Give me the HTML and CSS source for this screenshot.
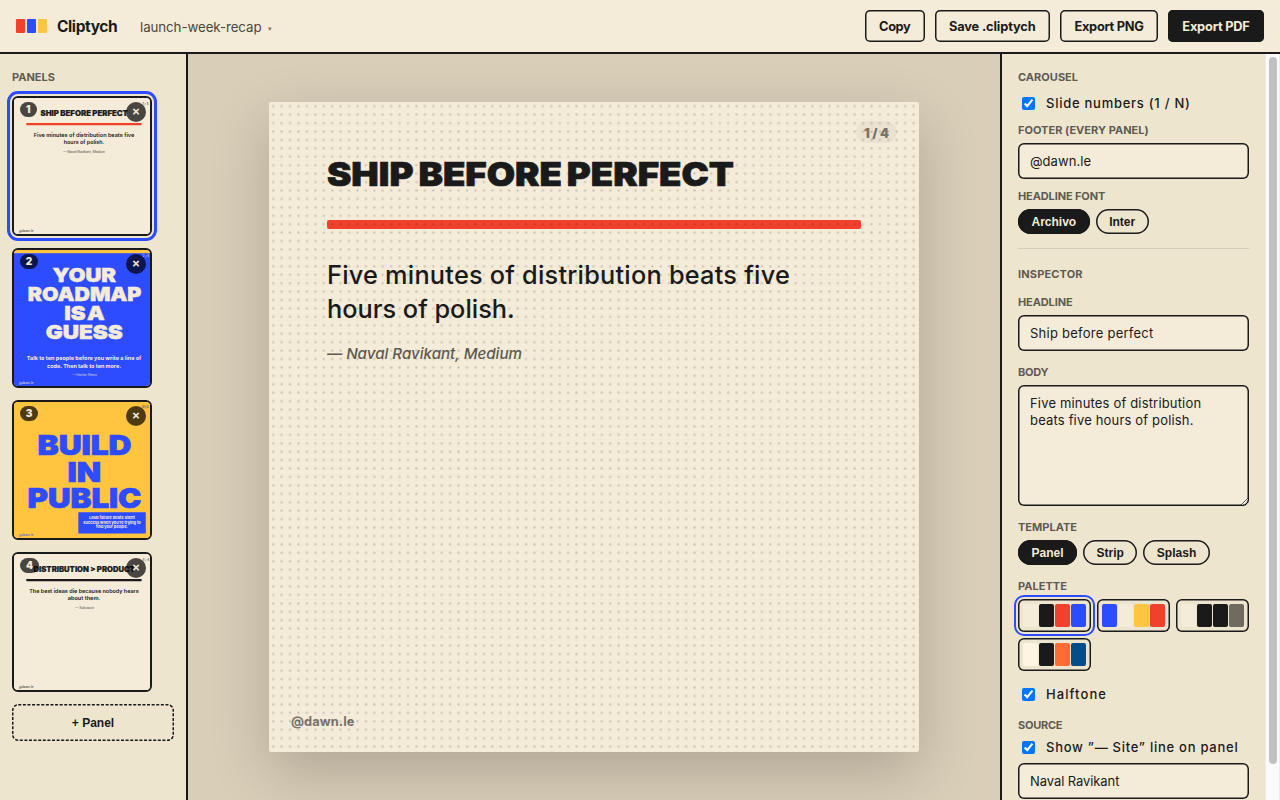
FILE: index.html
```html
<!DOCTYPE html>
<html lang="en">
<head>
<meta charset="utf-8">
<title>Cliptych</title>
<link rel="stylesheet" href="styles.css">
</head>
<body>
<div class="app">
  <header class="topbar">
    <div class="logo"><i class="logo-red"></i><i class="logo-blue"></i><i class="logo-yellow"></i></div>
    <div class="brand">Cliptych</div>
    <div class="project">launch-week-recap <span class="caret">▾</span></div>
    <div class="actions">
      <button class="btn btn-copy">Copy</button>
      <button class="btn btn-save">Save .cliptych</button>
      <button class="btn btn-png">Export PNG</button>
      <button class="btn btn-pdf">Export PDF</button>
    </div>
  </header>
  <main class="workspace">
    <aside class="panels">
      <h2 class="label">PANELS</h2>
      <div class="thumb selected">
        <svg class="art cream" viewBox="0 0 136 136">
          <text class="display small" font-size="7" x="26.5" y="18" textLength="87.5" lengthAdjust="spacingAndGlyphs">SHIP BEFORE PERFECT</text>
          <rect x="12.3" y="25" width="115.3" height="2.2" rx=".4" fill="#f1412d"/>
          <g class="copy" font-size="5.3">
            <text x="70" y="39" textLength="100.5" lengthAdjust="spacingAndGlyphs">Five minutes of distribution beats five</text>
            <text x="70" y="45.7" textLength="40.5" lengthAdjust="spacingAndGlyphs">hours of polish.</text>
          </g>
          <text class="credit" x="70" y="54.7" textLength="42">— Naval Ravikant, Medium</text>
          <text class="tiny" x="5" y="133.5">@dawn.le</text>
          <text class="tiny" x="128.5" y="7">1 / 4</text>
        </svg>
        <span class="num num-1">1</span><button class="close">✕</button>
      </div>
      <div class="thumb">
        <svg class="art blue" viewBox="0 0 136 136">
          <rect width="136" height="3.2" fill="#ffc53f"/>
          <g class="display" font-size="19.4">
            <text x="38.5" y="31.6" textLength="63.5" lengthAdjust="spacingAndGlyphs">YOUR</text>
            <text x="13.8" y="50.8" textLength="113.5" lengthAdjust="spacingAndGlyphs">ROADMAP</text>
            <text x="50.2" y="69.8" textLength="40.5" lengthAdjust="spacingAndGlyphs">IS A</text>
            <text x="31.7" y="88.7" textLength="77" lengthAdjust="spacingAndGlyphs">GUESS</text>
          </g>
          <g class="copy bold" font-size="5.3">
            <text x="70" y="110" textLength="114.5" lengthAdjust="spacingAndGlyphs">Talk to ten people before you write a line of</text>
            <text x="70" y="118" textLength="74" lengthAdjust="spacingAndGlyphs">code. Then talk to ten more.</text>
          </g>
          <text class="credit upright" x="70.5" y="126" textLength="24.7">— Hacker News</text>
          <text class="tiny" x="5" y="133.5">@dawn.le</text>
          <text class="tiny" x="128.5" y="7">2 / 4</text>
        </svg>
        <span class="num">2</span><button class="close">✕</button>
      </div>
      <div class="thumb">
        <svg class="art yellow" viewBox="0 0 136 136">
          <g class="display large" font-size="27.1">
            <text x="23.5" y="52.8" textLength="94" lengthAdjust="spacingAndGlyphs">BUILD</text>
            <text x="53.6" y="79.6" textLength="33.6" lengthAdjust="spacingAndGlyphs">IN</text>
            <text x="13.6" y="105.8" textLength="113.8" lengthAdjust="spacingAndGlyphs">PUBLIC</text>
          </g>
          <rect x="64.3" y="110.2" width="67.5" height="21.4" rx=".6" fill="#2d4bff"/>
          <g class="copy bold cream-ink" font-size="3.8">
            <text x="98" y="117" textLength="46" lengthAdjust="spacingAndGlyphs">Loud failure beats silent</text>
            <text x="98" y="121.6" textLength="57.5" lengthAdjust="spacingAndGlyphs">success when you’re trying to</text>
            <text x="98" y="126.3" textLength="32" lengthAdjust="spacingAndGlyphs">find your people.</text>
          </g>
          <text class="tiny" x="5" y="133.5">@dawn.le</text>
          <rect x="127" y="2.8" width="8" height="3.8" rx="1.9" fill="#000" opacity=".12"/>
          <text class="tiny" x="128" y="5.7">3 / 4</text>
        </svg>
        <span class="num">3</span><button class="close">✕</button>
      </div>
      <div class="thumb">
        <svg class="art cream" viewBox="0 0 136 136">
          <text class="display small" font-size="7" x="19.5" y="18" textLength="101.5" lengthAdjust="spacingAndGlyphs">DISTRIBUTION &gt; PRODUCT</text>
          <rect x="12.3" y="25" width="115.3" height="2.2" rx=".4" fill="#1a1a1a"/>
          <g class="copy" font-size="5.3">
            <text x="70" y="39" textLength="109.5" lengthAdjust="spacingAndGlyphs">The best ideas die because nobody hears</text>
            <text x="70" y="45.9" textLength="32.5" lengthAdjust="spacingAndGlyphs">about them.</text>
          </g>
          <text class="credit" x="70.5" y="54.7" textLength="19">— Substack</text>
          <text class="tiny" x="5" y="133.5">@dawn.le</text>
          <text class="tiny" x="128.5" y="7">4 / 4</text>
        </svg>
        <span class="num num-4">4</span><button class="close">✕</button>
      </div>
      <button class="add"><svg class="dashes" viewBox="0 0 162 37"><rect x=".75" y=".75" width="160.5" height="35.5" rx="5.5"/></svg>+ Panel</button>
    </aside>

    <section class="stage">
      <article class="board">
        <span class="board-num">1 / 4</span>
        <svg class="board-title" viewBox="0 0 534 34"><text x="0" y="25.6" font-size="32.8" textLength="407" lengthAdjust="spacingAndGlyphs">SHIP BEFORE PERFECT</text></svg>
        <div class="rule"></div>
        <p class="board-copy"><span class="line-a">Five minutes of distribution beats five</span><br><span class="line-b">hours of polish.</span></p>
        <p class="board-credit">— Naval Ravikant, Medium</p>
        <span class="board-footer">@dawn.le</span>
        <svg class="halftone" viewBox="0 0 650 650">
          <defs><pattern id="dots" width="8.426" height="8.426" patternUnits="userSpaceOnUse"><circle cx="4.213" cy="4.213" r="1.15"/></pattern></defs>
          <rect width="650" height="650" fill="url(#dots)"/>
        </svg>
      </article>
    </section>

    <aside class="inspector">
      <div class="fields">
        <h2 class="label">CAROUSEL</h2>
        <label class="check check-1"><input type="checkbox" checked><span>Slide numbers (1 / N)</span></label>
        <h3 class="label l-footer">FOOTER (EVERY PANEL)</h3>
        <input class="field f-handle" value="@dawn.le">
        <h3 class="label l-font">HEADLINE FONT</h3>
        <div class="pills"><button class="pill on">Archivo</button><button class="pill">Inter</button></div>
        <hr class="divider">
        <h2 class="label l-inspector">INSPECTOR</h2>
        <h3 class="label l-headline">HEADLINE</h3>
        <input class="field" value="Ship before perfect">
        <h3 class="label l-body">BODY</h3>
        <textarea class="field area">Five minutes of distribution
beats five hours of polish.</textarea>
        <h3 class="label l-template">TEMPLATE</h3>
        <div class="pills"><button class="pill on">Panel</button><button class="pill">Strip</button><button class="pill">Splash</button></div>
        <h3 class="label l-palette">PALETTE</h3>
        <div class="palettes">
          <div class="palette selected"><i class="c-cream"></i><i class="c-ink"></i><i class="c-red"></i><i class="c-blue"></i></div>
          <div class="palette"><i class="c-blue"></i><i class="c-cream"></i><i class="c-yellow"></i><i class="c-red"></i></div>
          <div class="palette"><i class="c-cream"></i><i class="c-ink"></i><i class="c-ink"></i><i class="c-grey"></i></div>
          <div class="palette"><i class="c-peach"></i><i class="c-ink"></i><i class="c-orange"></i><i class="c-navy"></i></div>
        </div>
        <label class="check check-2"><input type="checkbox" checked><span>Halftone</span></label>
        <h3 class="label l-source">SOURCE</h3>
        <label class="check check-3"><input type="checkbox" checked><span>Show ”— Site” line on panel</span></label>
        <input class="field f-source" value="Naval Ravikant">
      </div>
      <div class="track"><div class="thumbbar"></div></div>
    </aside>
  </main>
</div>
</body>
</html>
```
FILE: styles.css
```css
* { box-sizing: border-box; }
body { margin: 0; font-family: Inter, "Liberation Sans", sans-serif; color: #1a1a1a; }
h2, h3, p { margin: 0; }
button { border: 0; padding: 0; background: none; color: inherit; font-family: inherit; white-space: nowrap; }
.app { width: 1280px; height: 800px; overflow: hidden; display: flex; flex-direction: column; }

.topbar { flex: none; height: 54px; padding: 0 16px; display: flex; align-items: center; background: #f4ebd9; border-bottom: 2px solid #1a1a1a; }
.logo { display: flex; gap: 2px; margin-right: 10px; }
.logo i { width: 9px; height: 14px; border-radius: 1px; }
.logo-red, .c-red { background: #f1412d; }
.logo-blue, .c-blue { background: #2d4bff; }
.logo-yellow, .c-yellow { background: #ffc53f; }
.brand { width: 83px; padding-top: 1px; font-size: 15.5px; font-weight: 700; letter-spacing: -.4px; }
.project { padding-top: 1px; font-size: 13.3px; letter-spacing: -.08px; color: #4a4740; }
.caret { font-size: 7px; margin-left: 3px; vertical-align: 1px; color: #77736a; }
.actions { display: flex; gap: 10px; margin-left: auto; }
.btn { height: 32px; padding-top: 1px; border-radius: 5px; font-size: 12.8px; font-weight: 700; box-shadow: inset 0 0 0 1.5px #1a1a1a; }
.btn-copy { width: 59.5px; letter-spacing: -.4px; }
.btn-save { width: 115.5px; letter-spacing: -.12px; }
.btn-png { width: 98px; letter-spacing: -.3px; }
.btn-pdf { width: 96px; letter-spacing: -.2px; background: #1a1a1a; color: #f4ebd9; }

.workspace { flex: 1; min-height: 0; display: grid; grid-template-columns: 188px 812px 280px; }
.label { font-size: 11px; line-height: 14px; font-weight: 700; letter-spacing: .02px; color: #5f5b52; }

.panels { padding: 16px 12px; background: #eee5cf; border-right: 2px solid #1a1a1a; display: flex; flex-direction: column; gap: 12px; }
.thumb { position: relative; flex: none; width: 140px; height: 140px; border: 2px solid #1a1a1a; border-radius: 6px; }
.thumb.selected { outline: 3px solid #2d4bff; outline-offset: 2px; }
.art { display: block; width: 136px; height: 136px; border-radius: 4px; }
.cream { background: #f4ebd9; fill: #1a1a1a; stroke: #1a1a1a; }
.blue { background: #2d4bff; fill: #f4ebd9; stroke: #f4ebd9; }
.yellow { background: #ffc53f; fill: #2d4bff; stroke: #2d4bff; }
.art, .art * { stroke-width: 0; }
.cream-ink { fill: #f4ebd9; }
.display { font-weight: 900; word-spacing: -.13em; }
.display, .display text { stroke-width: .5px; }
.display.small { stroke-width: .2px; word-spacing: -.03em; }
.display.large text { stroke-width: .7px; }
.copy { font-weight: 600; text-anchor: middle; }
.copy.bold { font-weight: 700; }
.credit { font-size: 3.4px; font-style: italic; text-anchor: middle; opacity: .8; }
.credit.upright { font-style: normal; }
.tiny { font-size: 3px; font-weight: 600; opacity: .75; }
.num { position: absolute; left: 6px; top: 4px; width: 18px; height: 15px; border-radius: 8px; background: rgba(0,0,0,.7); color: #f4ebd9; font-size: 10px; line-height: 15px; font-weight: 900; text-align: center; }
.num-1 { width: 16.5px; }
.num-4 { width: 19px; }
.close { position: absolute; right: 4px; top: 4px; width: 20px; height: 20px; border-radius: 50%; background: rgba(0,0,0,.7); color: #f4ebd9; font: 700 9.5px/20px "DejaVu Sans", sans-serif; -webkit-text-stroke: .5px #f4ebd9; }
.add { position: relative; flex: none; height: 37px; font: 700 12px "Liberation Sans", sans-serif; }
.dashes { position: absolute; inset: 0; width: 162px; height: 37px; fill: none; stroke: #1a1a1a; stroke-width: 1.5px; stroke-dasharray: 3 1.6; }

.stage { display: flex; justify-content: center; padding-top: 48px; background: #d9ceb8; overflow: hidden; }
.board { position: relative; width: 650px; height: 650px; padding: 58px; border-radius: 2px; background: #f4ebd9; box-shadow: 0 20px 60px rgba(0,0,0,.2); }
.board-num { position: absolute; right: 22px; top: 19px; width: 41px; height: 22px; border-radius: 11px; background: rgba(0,0,0,.035); color: #77736a; font-size: 12.8px; line-height: 23px; padding-top: .5px; font-weight: 900; text-align: center; }
.board-title { display: block; width: 534px; height: 34px; overflow: visible; font-weight: 900; word-spacing: -.13em; fill: #1a1a1a; stroke: #1a1a1a; stroke-width: .7px; }
.rule { height: 9.6px; margin-top: 25.6px; border-radius: 2px; background: #f1412d; }
.board-copy { margin-top: 29px; font-size: 25.3px; line-height: 34px; font-weight: 500; white-space: nowrap; }
.line-a { letter-spacing: .23px; }
.line-b { letter-spacing: 0; }
.board-credit { margin-top: 18px; font-size: 15.2px; line-height: 20px; font-style: italic; font-weight: 500; letter-spacing: -.04px; color: #5f5b52; }
.board-footer { position: absolute; left: 22px; bottom: 22px; font-size: 12.8px; line-height: 16px; font-weight: 700; letter-spacing: .1px; color: #77736a; }
.halftone { position: absolute; inset: 0; width: 650px; height: 650px; fill: #1a1a1a; opacity: .18; }

.inspector { min-height: 0; overflow: hidden; display: flex; background: #eee5cf; border-left: 2px solid #1a1a1a; }
.fields { width: 263px; padding: 16px; }
.track { width: 15px; padding: 3px 3px 0 4px; background: #fafafa; border-left: 1px solid #ececec; border-right: 1px solid #ececec; }
.thumbbar { width: 8px; height: 707px; border-radius: 4px; background: #c1c1c1; margin-left: -1px; }
.check { display: flex; align-items: center; height: 17px; padding-left: 4px; font-size: 13px; font-weight: 500; letter-spacing: .74px; white-space: nowrap; }
.check span { padding-bottom: 1px; }
.check input { width: 13px; height: 13px; margin: 0 11px 0 0; }
.check-1 { margin-top: 11px; }
.check-2 { margin-top: 15px; letter-spacing: 1.08px; }
.check-3 { margin-top: 7px; }
.l-footer { margin: 11px 0 6px; }
.l-font { margin: 10px 0 6px; letter-spacing: -.12px; }
.l-inspector { margin-top: 18px; letter-spacing: .15px; }
.l-headline { margin: 14px 0 6px; letter-spacing: -.12px; }
.l-body { margin: 14px 0 6px; letter-spacing: -.25px; }
.l-template { margin: 14px 0 6px; }
.l-palette { margin: 14px 0 6px; }
.l-source { margin-top: 15px; letter-spacing: -.25px; }
.field { display: block; width: 231px; height: 36px; padding: 0 12px; border: 0; border-radius: 6px; outline: 0; background: #f4ebd9; box-shadow: inset 0 0 0 1.5px #1a1a1a; color: #1a1a1a; font: 400 13px/17px Inter, sans-serif; letter-spacing: .25px; }
.f-handle { letter-spacing: .05px; }
.f-source { margin-top: 7px; letter-spacing: -.08px; }
.area { height: 121px; padding: 10px 12px; letter-spacing: .17px; resize: vertical; }
.pills { display: flex; gap: 6px; }
.pill { height: 25px; padding: 0 13.5px; border-radius: 13px; box-shadow: inset 0 0 0 1.5px #1a1a1a; font: 700 12px "Liberation Sans", sans-serif; }
.pill.on { background: #1a1a1a; color: #f4ebd9; }
.divider { height: 1px; margin: 14px 0 0; border: 0; background: #d5cdb9; }
.palettes { display: grid; grid-template-columns: repeat(3, 1fr); gap: 6px; }
.palette { height: 33px; padding: 5px 5px 5px 5.3px; display: flex; gap: 1.5px; border-radius: 6px; box-shadow: inset 0 0 0 1.5px #1a1a1a; }
.palette.selected { outline: 2px solid #2d4bff; outline-offset: 2px; }
.palette i { flex: 1; border-radius: 2px; }
.c-cream { background: #f4ebd9; }
.c-ink { background: #1a1a1a; }
.c-grey { background: #6f6b5f; }
.c-peach { background: #fff3e2; }
.c-orange { background: #ff6b35; }
.c-navy { background: #004e89; }
```
